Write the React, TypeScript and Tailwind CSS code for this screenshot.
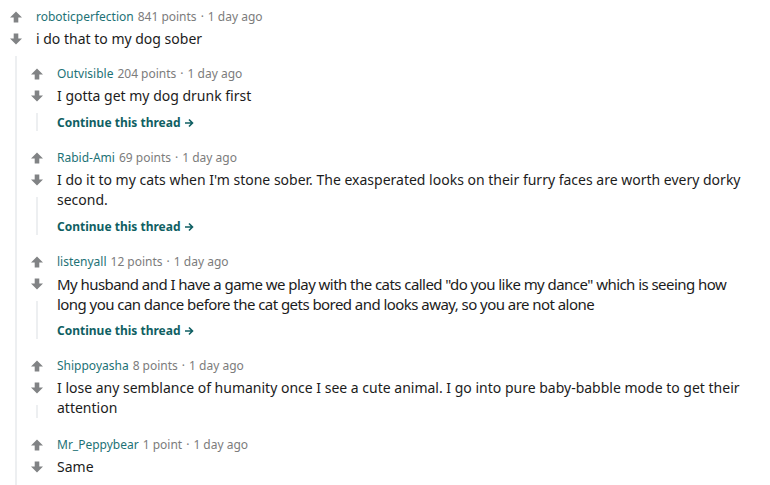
import React from 'react';

type Reply = {
  user: string;
  points: string;
  body: string;
  more?: boolean;
  narrow?: boolean;
};

const replies: Reply[] = [
  { user: 'Outvisible', points: '204 points', body: 'I gotta get my dog drunk first', more: true },
  {
    user: 'Rabid-Ami',
    points: '69 points',
    body: "I do it to my cats when I'm stone sober. The exasperated looks on their furry faces are worth every dorky second.",
    more: true,
  },
  {
    user: 'listenyall',
    points: '12 points',
    body: 'My husband and I have a game we play with the cats called "do you like my dance" which is seeing how long you can dance before the cat gets bored and looks away, so you are not alone',
    more: true,
    narrow: true,
  },
  {
    user: 'Shippoyasha',
    points: '8 points',
    body: 'I lose any semblance of humanity once I see a cute animal. I go into pure baby-babble mode to get their attention',
  },
  { user: 'Mr_Peppybear', points: '1 point', body: 'Same' },
];

const UpArrow = () => (
  <svg width="12" height="12" viewBox="0 0 12 12">
    <path d="M6 0.5 L12 6.5 L8.3 6.5 L8.3 11.5 L3.7 11.5 L3.7 6.5 L0 6.5 Z" fill="#818385" />
  </svg>
);

const DownArrow = () => (
  <svg width="12" height="12" viewBox="0 0 12 12">
    <path d="M6 11.5 L12 5.5 L8.3 5.5 L8.3 0.5 L3.7 0.5 L3.7 5.5 L0 5.5 Z" fill="#818385" />
  </svg>
);

const Votes = ({ line }: { line: boolean }) => (
  <div className="flex w-[21px] shrink-0 flex-col items-center">
    <div className="flex h-4 items-center">
      <UpArrow />
    </div>
    <div className="mt-1 flex h-5 items-center">
      <DownArrow />
    </div>
    {line && <div className="mt-[7px] w-[2px] flex-1 bg-[#edeff1]" />}
  </div>
);

const Header = ({ user, points }: { user: string; points: string }) => (
  <div className="flex h-4 items-center text-[12px] leading-4">
    <span className="text-[#1d7276]">{user}</span>
    <span className="ml-1 text-[#7c7c7c]">{points}</span>
    <span className="mx-1 text-[#7c7c7c]">·</span>
    <span className="text-[#7c7c7c]">1 day ago</span>
  </div>
);

export default function App() {
  return (
    <div className="min-h-[485px] w-[770px] bg-white pl-[5px] pt-[9px] font-['Noto_Sans',sans-serif] text-[#1c1c1c]">
      <div className="flex">
        <Votes line />
        <div className="flex-1">
          <div className="pl-[10px]">
            <Header user="roboticperfection" points="841 points" />
            <p className="mt-1 text-[14px] leading-5">i do that to my dog sober</p>
          </div>
          <div className="mt-[17px] flex flex-col gap-[19px] pb-[10px]">
            {replies.map((r) => (
              <div key={r.user} className="flex">
                <Votes line={!!r.more || r.user === 'Shippoyasha'} />
                <div className="flex-1 pl-[10px] pr-[22px]">
                  <Header user={r.user} points={r.points} />
                  <p
                    className={`mt-1 leading-5 ${
                      r.narrow ? 'text-[15px] tracking-[-0.55px]' : 'text-[14px]'
                    }`}
                  >
                    {r.body}
                  </p>
                  {r.more && (
                    <a className="mt-[9px] flex h-4 items-center text-[12px] font-bold leading-4 text-[#0f5f63]">
                      Continue this thread
                      <svg className="ml-[3px]" width="10" height="10" viewBox="0 0 10 10">
                        <path
                          d="M1 5 H8.5 M5 1.5 L8.5 5 L5 8.5"
                          fill="none"
                          stroke="#0f5f63"
                          strokeWidth="1.6"
                        />
                      </svg>
                    </a>
                  )}
                </div>
              </div>
            ))}
          </div>
        </div>
      </div>
    </div>
  );
}
